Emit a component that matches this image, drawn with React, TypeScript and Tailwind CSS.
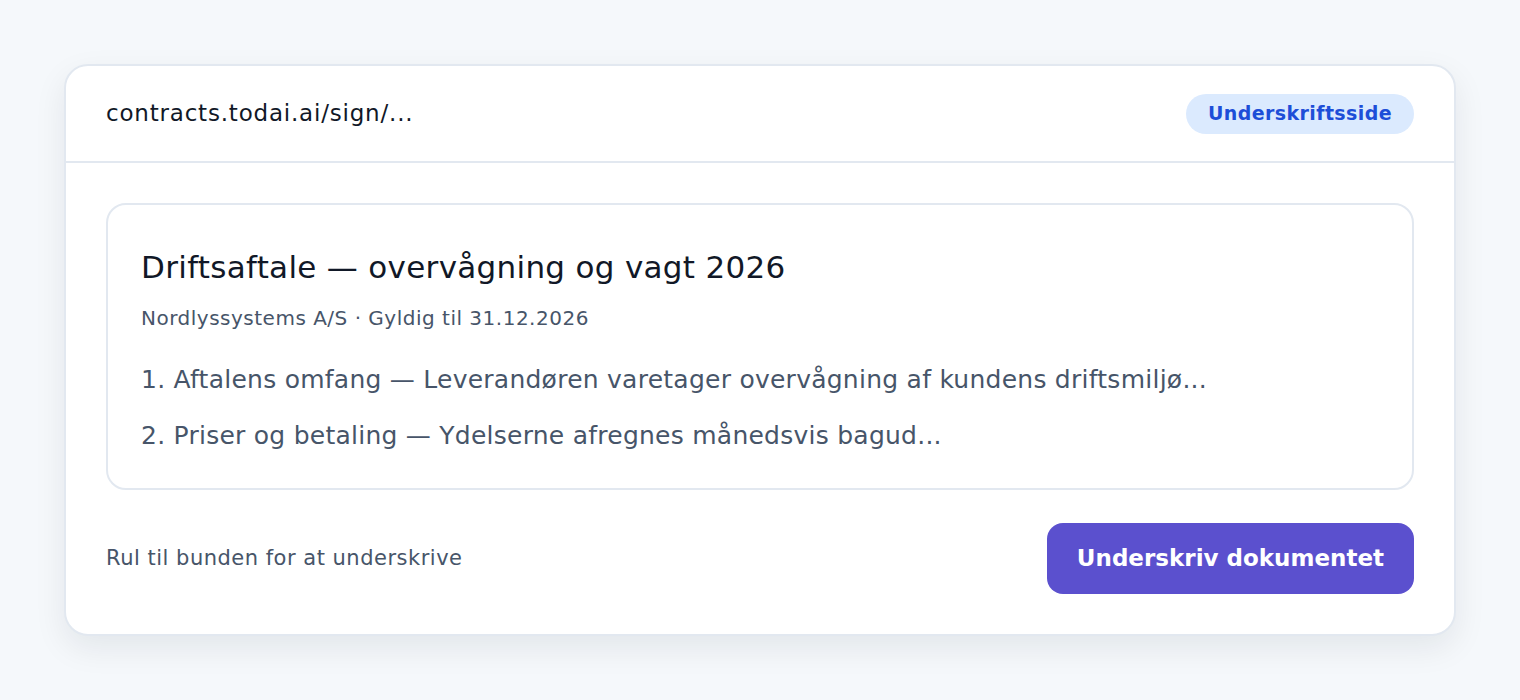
export default function App() {
  return (
    <div className="min-h-[700px] bg-[#f5f8fb] p-16" style={{ fontFamily: "'DejaVu Sans', 'Open Sans', sans-serif" }}>
      <div className="rounded-3xl border-2 border-[#e2e8f0] bg-white shadow-[0_12px_32px_rgba(15,23,42,0.08)]">
        <div className="flex h-[97px] items-center justify-between border-b-2 border-[#e2e8f0] px-10">
          <span className="text-[23px] tracking-[0.8px] text-[#111827]">contracts.todai.ai/sign/...</span>
          <span className="flex h-10 items-center rounded-full bg-[#dbeafe] px-[22px] text-[19px] font-semibold tracking-[0.4px] text-[#1d4ed8]">
            Underskriftsside
          </span>
        </div>

        <div className="px-10 pt-10 pb-10">
          <div className="rounded-[20px] border-2 border-[#e2e8f0] px-[33px] pt-[42px] pb-[36px]">
            <h1 className="text-[31px] leading-10 tracking-[0.3px] text-[#111827]">
              Driftsaftale — overvågning og vagt 2026
            </h1>
            <p className="mt-[17px] text-[20px] leading-7 tracking-[0.5px] text-[#475569]">
              Nordlyssystems A/S · Gyldig til 31.12.2026
            </p>
            <div className="mt-8 space-y-6 text-[25px] leading-8 tracking-[0.25px] text-[#475569]">
              <p>1. Aftalens omfang — Leverandøren varetager overvågning af kundens driftsmiljø...</p>
              <p>2. Priser og betaling — Ydelserne afregnes månedsvis bagud...</p>
            </div>
          </div>

          <div className="mt-[33px] flex items-center justify-between">
            <span className="text-[21px] tracking-[0.5px] text-[#475569]">Rul til bunden for at underskrive</span>
            <button className="h-[71px] rounded-2xl bg-[#5b50ce] px-[30px] text-[23px] font-semibold text-white">
              Underskriv dokumentet
            </button>
          </div>
        </div>
      </div>
    </div>
  );
}
